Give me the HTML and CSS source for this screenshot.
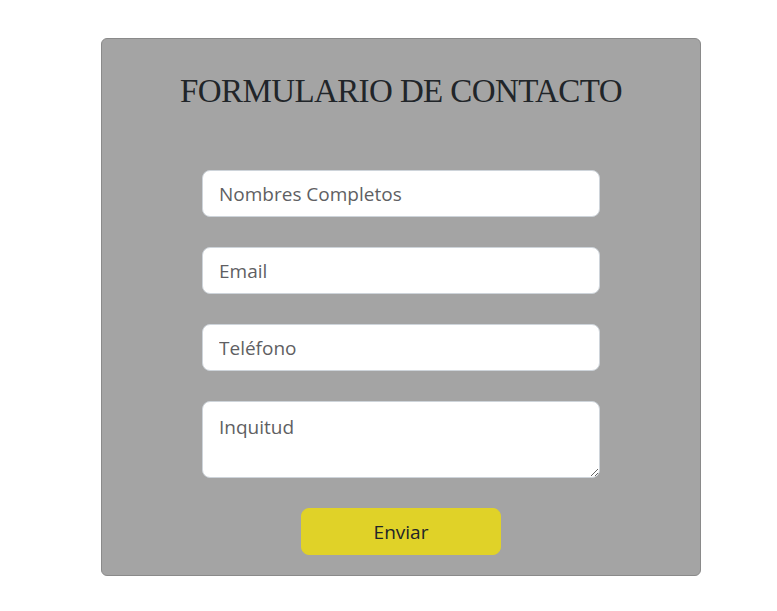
FILE: index.html
```html
<!DOCTYPE html>
<html lang="es">
<head>
<meta charset="utf-8">
<title>Formulario de contacto</title>
<link rel="stylesheet" href="styles.css">
</head>
<body>
<main class="page">
  <form class="card">
    <h1 class="title">FORMULARIO DE CONTACTO</h1>
    <div class="fields">
      <input class="field" type="text" placeholder="Nombres Completos">
      <input class="field" type="email" placeholder="Email">
      <input class="field" type="tel" placeholder="Teléfono">
      <textarea class="field area" placeholder="Inquitud"></textarea>
      <button class="send" type="button">Enviar</button>
    </div>
  </form>
</main>
</body>
</html>
```
FILE: styles.css
```css
* { box-sizing: border-box; }
html, body { margin: 0; padding: 0; background: #fff; }
.page {
  padding: 38px 0 0 101px;
}
.card {
  width: 600px;
  height: 538px;
  background: #a4a4a4;
  border: 1px solid #8a8a8a;
  border-radius: 6px;
  padding: 30px 0 0;
  display: flex;
  flex-direction: column;
  align-items: center;
}
.title {
  margin: 0;
  font-family: "Liberation Serif", serif;
  font-weight: 400;
  font-size: 33px;
  letter-spacing: -0.6px;
  line-height: 44px;
  color: #212529;
}
.fields {
  margin-top: 57px;
  width: 398px;
  display: flex;
  flex-direction: column;
  align-items: center;
  gap: 30px;
}
.field {
  width: 100%;
  height: 47px;
  padding: 0 16px;
  font-family: "Open Sans", "Noto Sans", sans-serif;
  font-size: 19px;
  color: #212529;
  background: #fff;
  border: 1px solid #ced4da;
  border-radius: 8px;
  outline: none;
}
.field::placeholder { color: #5f5f63; }
.area {
  height: 77px;
  padding: 13px 16px 8px;
  resize: vertical;
  line-height: 1.3;
}
.send {
  margin-top: 0;
  width: 200px;
  height: 47px;
  background: #e0d228;
  border: 1px solid #e0d228;
  border-radius: 8px;
  font-family: "Open Sans", "Noto Sans", sans-serif;
  font-size: 19px;
  color: #212529;
}
```
